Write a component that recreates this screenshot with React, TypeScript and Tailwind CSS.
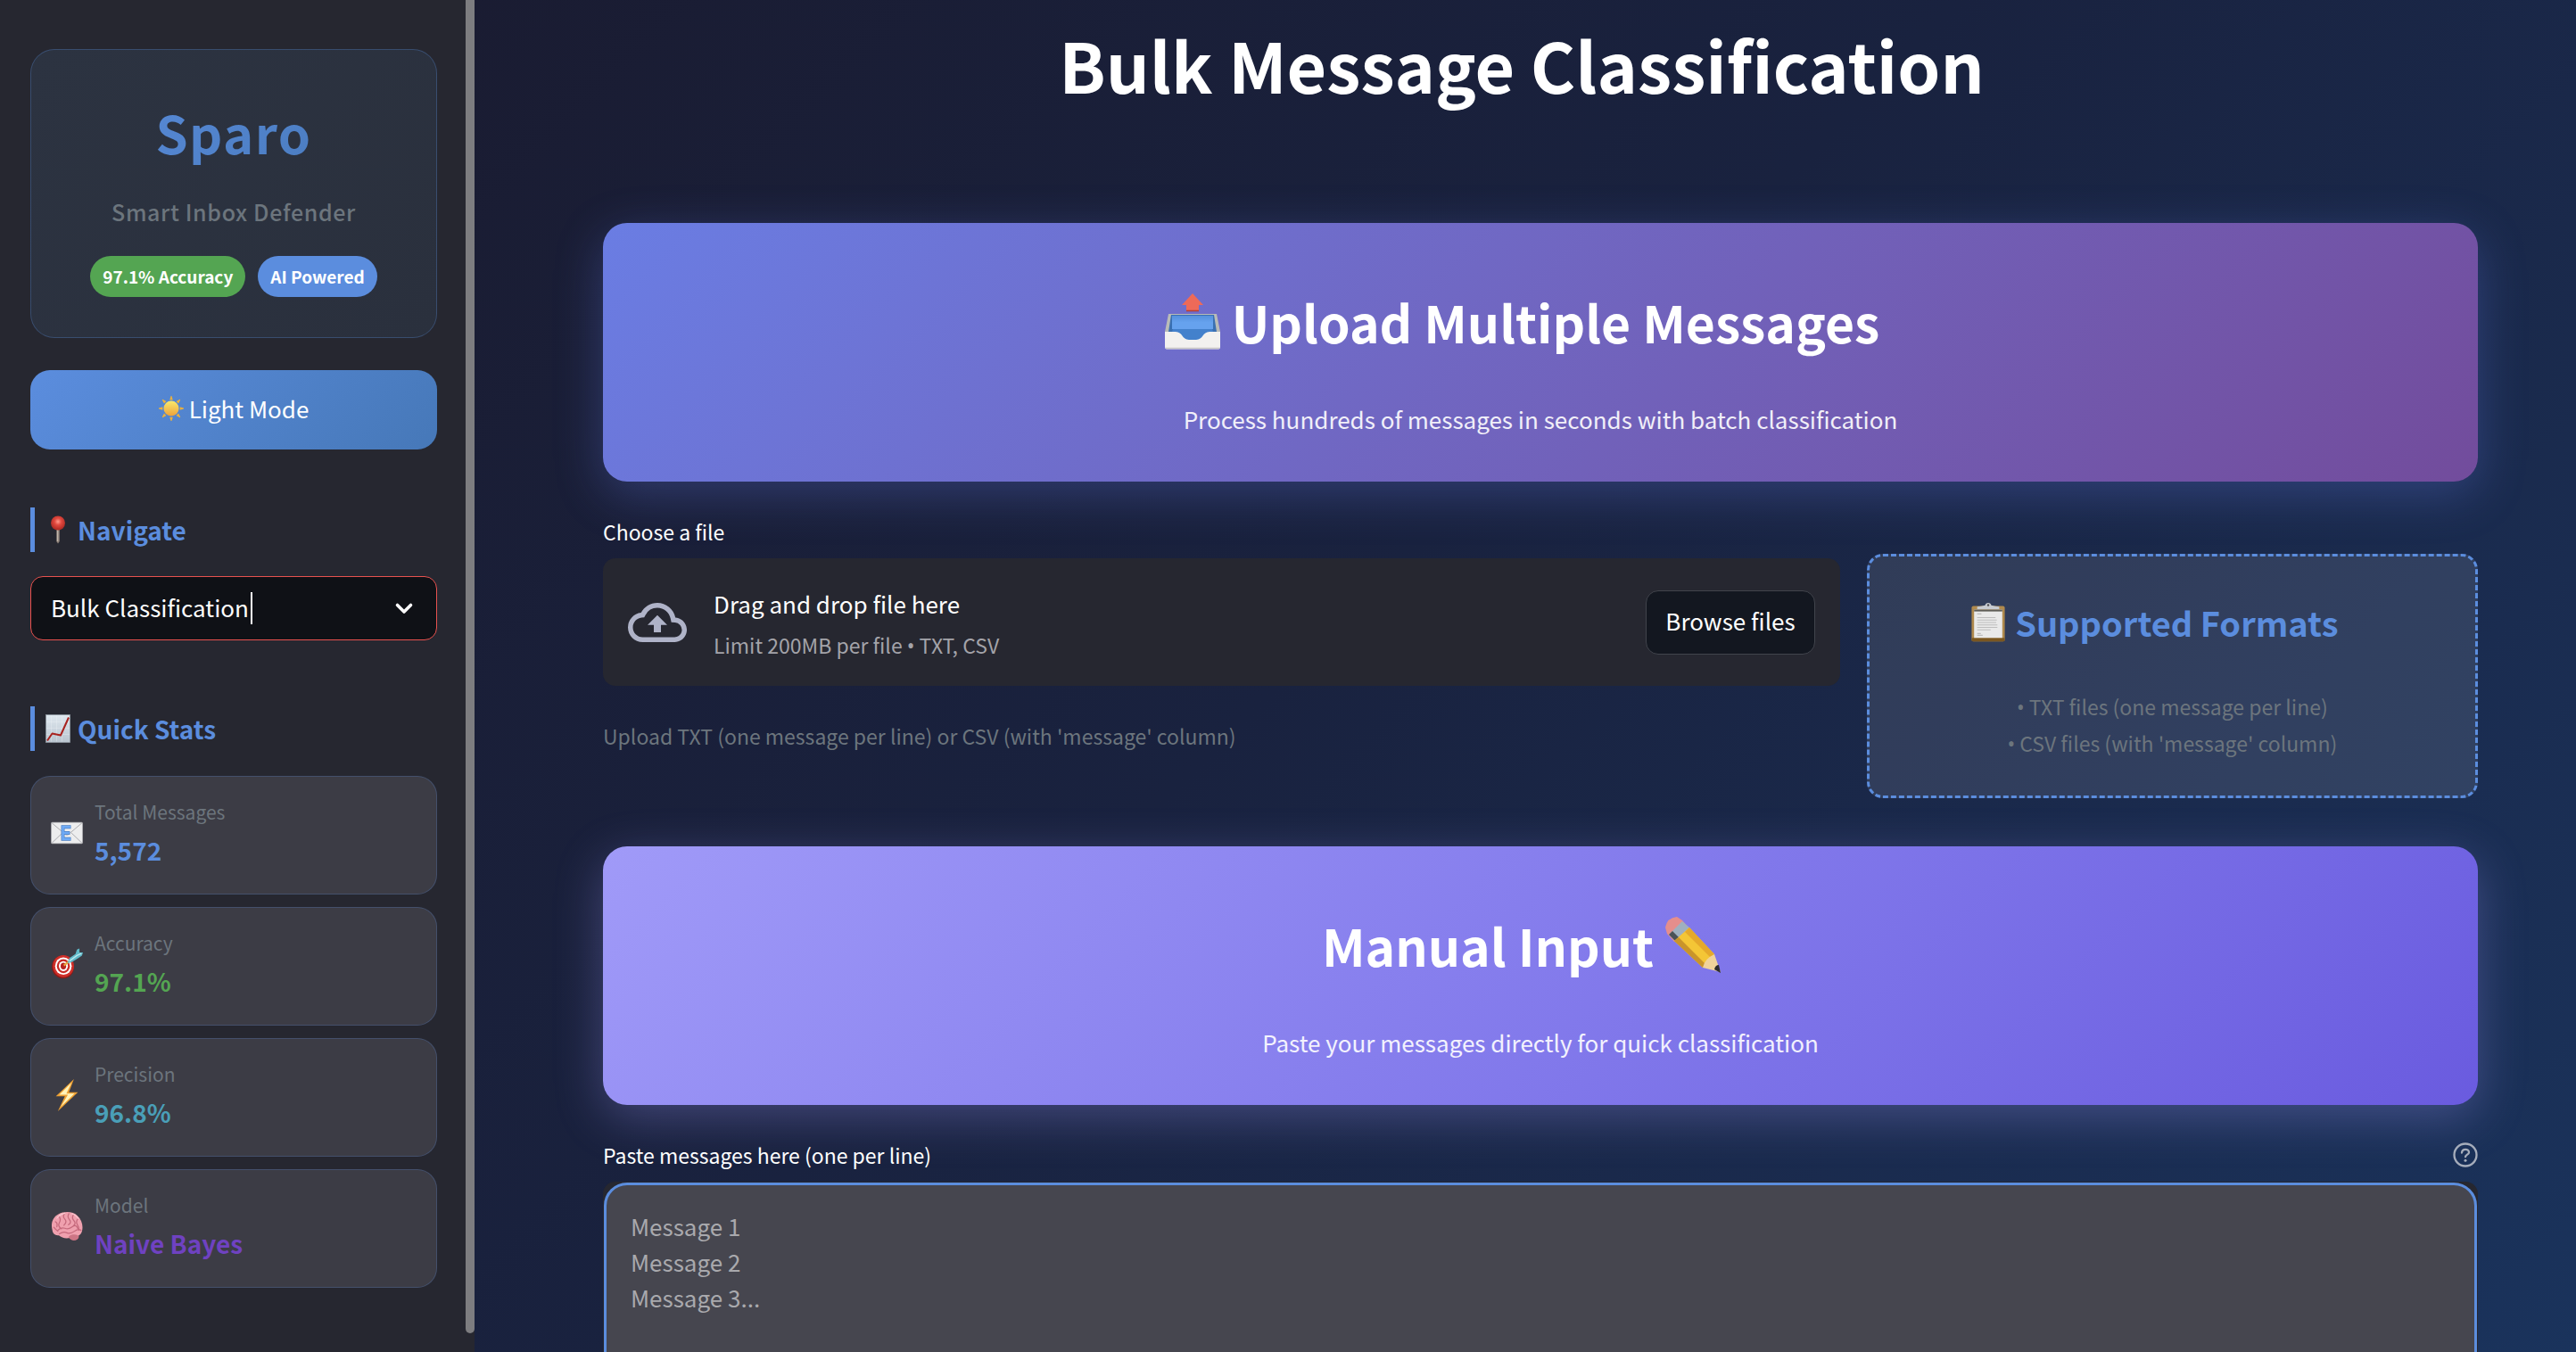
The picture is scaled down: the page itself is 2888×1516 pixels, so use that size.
import React from "react";

const stats = [
  { icon: "mail", label: "Total Messages", value: "5,572", color: "text-[#5b8dde]" },
  { icon: "dart", label: "Accuracy", value: "97.1%", color: "text-[#54a552]" },
  { icon: "bolt", label: "Precision", value: "96.8%", color: "text-[#4a9fb8]" },
  { icon: "brain", label: "Model", value: "Naive Bayes", color: "text-[#6f42c1]" },
];

function Icon({ name, className }: { name: string; className: string }) {
  return (
    <svg className={className} viewBox="0 0 64 64" fill="none" aria-hidden="true">
      {name === "sun" && (
        <g>
          <defs>
            <linearGradient id="sun" x1="0" y1="0" x2="0" y2="1">
              <stop stopColor="#f9ea6c" />
              <stop offset="1" stopColor="#eda13a" />
            </linearGradient>
          </defs>
          {[0, 45, 90, 135, 180, 225, 270, 315].map((a) => (
            <path key={a} d="M28 10L31 0H33L36 10Z" fill="#e9b03f" transform={`rotate(${a} 32 32)`} />
          ))}
          <circle cx="32" cy="32" r="19.500" fill="url(#sun)" />
        </g>
      )}
      {name === "pin" && (
        <g>
          <defs>
            <radialGradient id="pin" cx=".5" cy=".4" r=".6">
              <stop stopColor="#ff9a8c" />
              <stop offset=".4" stopColor="#e2493f" />
              <stop offset="1" stopColor="#a92822" />
            </radialGradient>
          </defs>
          <path d="M28.500 24h7v34l-3.500 5l-3.500-5z" fill="#8d8178" />
          <path d="M30 24h2.500v34H30z" fill="#c1b6ab" />
          <circle cx="32" cy="17" r="16" fill="url(#pin)" />
        </g>
      )}
      {name === "chart" && (
        <g>
          <defs>
            <linearGradient id="chart" x1="0" y1="0" x2="0" y2="1">
              <stop stopColor="#dfe8ef" />
              <stop offset="1" stopColor="#b9c4cf" />
            </linearGradient>
          </defs>
          <rect x="5" y="1" width="54" height="62" fill="url(#chart)" stroke="#8d969e" strokeWidth="1.500" />
          <path d="M17 3v58M29 3v58M41 3v58M6 17h52M6 31h52M6 45h52" stroke="#f2f6f9" strokeWidth="1" opacity=".6" />
          <path d="M8 59L19 43L38 47L56 7" stroke="#a8221f" strokeWidth="4" strokeLinejoin="round" />
        </g>
      )}
      {name === "mail" && (
        <g>
          <rect x="1" y="11" width="62" height="42" rx="1.500" fill="#ededee" stroke="#c6c6c8" />
          <path d="M2 12L29 35Q32 37 35 35L62 12M2 52L24 31M62 52L40 31" stroke="#a5a5a9" strokeWidth="1.600" />
          <path d="M40 20H24v24h16M24 32h14" stroke="#4a7fc4" strokeWidth="7" />
          <path d="M39 20H24v24h15M24 32h13" stroke="#6faaf5" strokeWidth="4.500" />
        </g>
      )}
      {name === "dart" && (
        <g>
          <ellipse cx="24" cy="38" rx="22" ry="23" fill="#8c1a17" transform="rotate(-20 24 38)" />
          <ellipse cx="25" cy="36" rx="21" ry="22" fill="#cf2f29" />
          <ellipse cx="25" cy="36" rx="16.500" ry="17.500" fill="#fff" />
          <ellipse cx="25" cy="36" rx="13" ry="14" fill="#c92b26" />
          <ellipse cx="25" cy="36" rx="9" ry="10" fill="#fff" />
          <ellipse cx="25" cy="36" rx="5.500" ry="6.500" fill="#b6231f" />
          <path d="M26 35L36 27" stroke="#e9a53b" strokeWidth="4" />
          <path d="M33 30L37 20L49 12L52 3L57 1L57 9L64 9L62 15L55 20L42 28Z" fill="#5fb9c8" />
          <path d="M37 26L52 15L61 11" stroke="#b8e7ee" strokeWidth="2.500" />
        </g>
      )}
      {name === "bolt" && (
        <g>
          <path d="M46 0L10 34H28L14 64L54 26H36Z" fill="#eea133" />
          <path d="M41 7L17 31H34L20 55L47 29H31Z" fill="#fff3b8" />
        </g>
      )}
      {name === "brain" && (
        <g>
          <path d="M40 50Q45 57 49 60Q57 57 55 49Z" fill="#b96072" />
          <path d="M3 40C-1 25 5 13 15 8C28 1 45 3 53 11C62 19 65 32 62 42C59 52 48 55 40 54C31 58 22 55 16 50C9 51 4 47 3 40Z" fill="#efa0ae" />
          <path d="M37 51C46 46 55 49 56 53C55 60 46 62 41 59C37 57 34 53 37 51Z" fill="#cd7585" />
          <path
            d="M9 23Q14 25 12 33M16 12Q21 18 17 25T21 37M27 7Q23 13 28 18T26 30M36 7Q32 13 37 19T35 29M45 9Q41 16 46 21T45 31M54 17Q49 23 53 29T56 40M13 41Q20 33 28 36T43 33T54 37M17 47Q25 42 32 45T47 42T60 40M6 34Q10 39 14 42"
            stroke="#c5697c"
            strokeWidth="2.200"
            strokeLinecap="round"
          />
          <path d="M12 16Q18 8 28 6M42 7Q50 9 55 17" stroke="#fbc9d1" strokeWidth="2" strokeLinecap="round" />
        </g>
      )}
      {name === "outbox" && (
        <g>
          <defs>
            <linearGradient id="tray" x1="0" y1="0" x2="0" y2="1">
              <stop stopColor="#5590dc" />
              <stop offset=".5" stopColor="#66a2ee" />
              <stop offset="1" stopColor="#66a2ee" />
            </linearGradient>
          </defs>
          <path d="M5 24H59L63 44V60H1V44Z" fill="#b9bcb8" />
          <path d="M8 25H56L59 44V55H5V44Z" fill="#3a70b2" />
          <path d="M9 26H55V41H9Z" fill="url(#tray)" />
          <path d="M10 41H54L59 55H5Z" fill="#4381cc" />
          <path d="M1 44H13C21 44 20 53 28 53H36C44 53 43 44 51 44H63V61Q63 63.500 61 63.500H3Q1 63.500 1 61Z" fill="#f2f1ef" />
          <path d="M2 62.500H62" stroke="#c9c8c6" strokeWidth="1.500" />
          <path d="M32 1L44 14H39V21H25V14H20Z" fill="#ee6a58" />
          <path d="M25 20.500H39" stroke="#b53f31" strokeWidth="1.500" />
        </g>
      )}
      {name === "clipboard" && (
        <g>
          <rect x="5" y="5" width="54" height="58" rx="3" fill="#b08a4d" />
          <rect x="5" y="57" width="54" height="6" rx="2" fill="#7a5721" />
          <path d="M9 11H55V57H9Z" fill="#e9e9e9" />
          <path d="M9 11H55V14H9Z" fill="#5f5d57" />
          <path d="M14 6Q20 6 27 4Q28 0 32 0Q36 0 37 4Q44 6 50 6V10H14Z" fill="#c7cbd0" />
          <circle cx="32" cy="3.500" r="1.800" fill="#4d4d52" />
          <path d="M14 18H21M14 24H44M14 28H46M14 32H45M14 36H47M14 40H47M14 44H36M14 50H20M14 53H23" stroke="#bdbdbd" strokeWidth="1.800" />
        </g>
      )}
      {name === "pencil" && (
        <g>
          <path d="M3 20L1 13Q3 2 14 1L20 5L28 14L11 29Z" fill="#e58e8c" />
          <path d="M5 21L20 6L28 13L12 28Z" fill="#9fb0bf" />
          <path d="M5 21L9 17L16 24L12 28Z" fill="#4b5257" />
          <path d="M11 28L28 13L56 43L43 58Z" fill="#f4c636" />
          <path d="M11 28L16 24L46 54L43 58Z" fill="#c9942a" />
          <path d="M23 18L28 13L56 43L52 47Z" fill="#e5a92b" />
          <path d="M43 58Q45 48 56 43L63 63Z" fill="#f0d39b" />
          <path d="M56 60Q57 55 61 55L63 64Z" fill="#2c2c2e" />
        </g>
      )}
    </svg>
  );
}

function SectionTitle({ icon, children }: { icon: string; children: React.ReactNode }) {
  return (
    <h2 className="flex h-[50px] items-center gap-1.5 border-l-[5px] border-[#5b8dde] pl-2.5 text-[28px] leading-[46px] font-bold text-[#5b8dde]">
      <Icon name={icon} className="size-8 shrink-0" />
      {children}
    </h2>
  );
}

function Bullet() {
  return <span className="font-['Noto_Sans',sans-serif] leading-none">•</span>;
}

function Banner({ className, title, text }: { className: string; title: React.ReactNode; text: string }) {
  return (
    <section className={`rounded-[27px] pt-[70px] pb-[50px] text-center text-white ${className}`}>
      <h2 className="flex items-center justify-center gap-3 pr-[42px] text-[57px] leading-[80px] font-bold">{title}</h2>
      <p className="mt-[50px] text-[26px] leading-10 text-white/90">{text}</p>
    </section>
  );
}

export default function App() {
  return (
    <div className="flex h-screen overflow-hidden bg-linear-135 from-[#1a1a2e] via-[#19223f] to-[#1a335c] font-['Noto_Sans_CJK_SC','Noto_Sans',sans-serif] text-white">
      <aside className="flex w-[532px] shrink-0 bg-[#262730]">
        <div className="min-w-0 flex-1 pt-[55px] pr-8 pl-[34px]">
          <div className="rounded-[27px] border border-[#5b8dde]/30 bg-linear-135 from-[#2c3341] to-[#2a303d] pt-[52px] pb-[45px] text-center">
            <h1 className="bg-linear-135 from-[#5b8dde] to-[#4678b8] bg-clip-text text-[58px] leading-[80px] font-bold tracking-wide text-transparent">
              Sparo
            </h1>
            <p className="mt-[29px] text-[25px] leading-10 font-medium tracking-wide text-[#6c757d]">Smart Inbox Defender</p>
            <div className="mt-[30px] flex justify-center gap-[14px] text-[19px] leading-[46px] font-bold">
              <span className="rounded-full bg-[#54a552] px-[14px]">97.1% Accuracy</span>
              <span className="rounded-full bg-[#5b8dde] px-[14px]">AI Powered</span>
            </div>
          </div>

          <button
            type="button"
            className="mt-9 flex h-[89px] w-full items-center justify-center gap-1.5 rounded-[22px] bg-linear-135 from-[#5b8dde] to-[#4678b8] pb-1 text-[26px]"
          >
            <Icon name="sun" className="size-7" />
            Light Mode
          </button>

          <div className="mt-[65px]">
            <SectionTitle icon="pin">Navigate</SectionTitle>
          </div>
          <div className="relative mt-[27px]">
            <select
              aria-label="Navigate"
              className="block h-[72px] w-full appearance-none rounded-[14px] border border-[#e8524f] bg-[#0f1116] px-[22px] pb-1 text-[26px] text-white outline-none"
            >
              <option>Bulk Classification</option>
            </select>
            <span className="absolute top-[18px] left-[247px] h-9 w-0.5 bg-white" />
            <svg className="pointer-events-none absolute top-6 right-[25px] size-6" viewBox="0 0 24 24" fill="none" aria-hidden="true">
              <path d="M4.500 8.500L12 16L19.500 8.500" stroke="#fafafa" strokeWidth="3.600" strokeLinecap="round" strokeLinejoin="round" />
            </svg>
          </div>

          <div className="mt-[74px]">
            <SectionTitle icon="chart">Quick Stats</SectionTitle>
          </div>
          <ul className="mt-7 flex flex-col gap-[14px]">
            {stats.map((s) => (
              <li key={s.label} className="flex items-center gap-[13px] rounded-[22px] border border-[#5b8dde]/25 bg-[#3c3c45] pt-[22px] pb-[27px] pl-[22px]">
                <Icon name={s.icon} className="size-9 shrink-0" />
                <div>
                  <p className="text-[21px] leading-[34px] text-[#6c757d]">{s.label}</p>
                  <p className={`mt-1 text-[28px] leading-[44px] font-bold ${s.color}`}>{s.value}</p>
                </div>
              </li>
            ))}
          </ul>
        </div>
        <div className="mb-[21px] w-[10px] shrink-0 rounded-b-full bg-[#7d7d80]" />
      </aside>

      <main className="min-w-0 flex-1 overflow-hidden pt-6 pr-[110px] pl-36">
        <h1 className="pr-[42px] text-center text-[77px] leading-[96px] font-bold">Bulk Message Classification</h1>

        <Banner
          className="mt-[130px] bg-linear-135 from-[#6a7de3] to-[#724c9c] shadow-[0_14px_54px_rgba(102,126,234,0.3)]"
          title={
            <>
              <Icon name="outbox" className="size-16" />
              Upload Multiple Messages
            </>
          }
          text="Process hundreds of messages in seconds with batch classification"
        />

        <div className="mt-[38px] grid grid-cols-[1386fr_685fr] gap-[30px]">
          <div>
            <label htmlFor="browse" className="block text-[23px] leading-9">
              Choose a file
            </label>
            <div className="mt-3 flex h-[143px] items-center rounded-[14px] bg-[#262730] px-7">
              <svg className="size-[66px] shrink-0" viewBox="0 0 24 24" fill="#afb3c8" aria-hidden="true">
                <path d="M19.350 10.040A7.490 7.490 0 0 0 12 4C9.110 4 6.600 5.640 5.350 8.040A5.994 5.994 0 0 0 0 14c0 3.310 2.690 6 6 6h13c2.760 0 5-2.240 5-5 0-2.640-2.050-4.780-4.650-4.960zM19 18H6c-2.210 0-4-1.790-4-4 0-2.050 1.530-3.760 3.560-3.970l1.070-.110.500-.950A5.469 5.469 0 0 1 12 6c2.620 0 4.880 1.860 5.390 4.430l.300 1.500 1.530.110A2.980 2.980 0 0 1 22 15c0 1.650-1.350 3-3 3zM8 13h2.550v3h2.900v-3H16l-4-4z" />
              </svg>
              <div className="ml-[30px] flex-1 pt-1">
                <p className="text-[26px] leading-[46px]">Drag and drop file here</p>
                <p className="text-[23px] leading-[46px] text-[#a3a3a9]">
                  Limit 200MB per file <Bullet /> TXT, CSV
                </p>
              </div>
              <button id="browse" type="button" className="h-[72px] rounded-[14px] border border-[#41444c] bg-[#131720] px-[21px] pb-1 text-[26px]">
                Browse files
              </button>
            </div>
            <p className="mt-9 text-[23px] leading-10 text-[#6c757d]">
              Upload TXT (one message per line) or CSV (with 'message' column)
            </p>
          </div>
          <section className="mt-[43px] rounded-[18px] border-[3px] border-dashed border-[#5b8dde] bg-white/10 pt-[48px] pb-[38px] text-center">
            <h3 className="flex items-center justify-center gap-2 pr-[42px] text-[38px] leading-[52px] font-bold text-[#5b8dde]">
              <Icon name="clipboard" className="size-11" />
              Supported Formats
            </h3>
            <div className="mt-12 text-[23px] leading-[41px] text-[#6c757d]">
              <p>
                <Bullet /> TXT files (one message per line)
              </p>
              <p>
                <Bullet /> CSV files (with 'message' column)
              </p>
            </div>
          </section>
        </div>

        <Banner
          className="mt-[54px] bg-linear-135 from-[#a09af8] to-[#6a5bdf] shadow-[0_14px_54px_rgba(162,155,254,0.3)]"
          title={
            <>
              Manual Input
              <Icon name="pencil" className="size-16" />
            </>
          }
          text="Paste your messages directly for quick classification"
        />

        <div className="mt-[38px] flex items-center justify-between">
          <label htmlFor="messages" className="text-[23px] leading-9">
            Paste messages here (one per line)
          </label>
          <button type="button" aria-label="Help">
            <svg className="size-7" viewBox="0 0 28 28" fill="none" stroke="#a6adbb" strokeWidth="2.300" aria-hidden="true">
              <circle cx="14" cy="14" r="12.500" />
              <path d="M10 11.500C10.300 6.500 18 6.800 18 11.200C18 13.500 14 13.800 14 16.200" strokeLinecap="round" />
              <circle cx="14" cy="20.200" r="1.500" fill="#a6adbb" stroke="none" />
            </svg>
          </button>
        </div>
        <div className="mt-3 rounded-[14px] bg-[#262730] p-px">
          <textarea
            id="messages"
            rows={7}
            placeholder={"Message 1\nMessage 2\nMessage 3..."}
            className="block w-full resize-none rounded-[26px] border-[3px] border-[#5b8dde] bg-[#46464f] px-[27px] py-[26px] text-[26px] leading-10 text-white placeholder-[#a9a9ad] outline-none"
          />
        </div>
      </main>
    </div>
  );
}
